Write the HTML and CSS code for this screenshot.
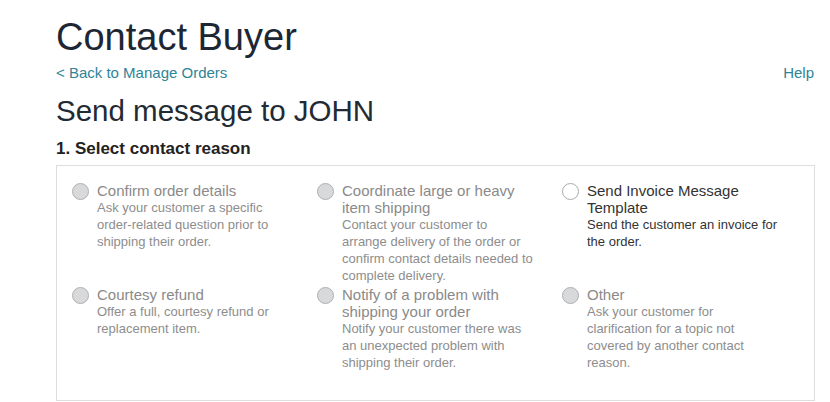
FILE: index.html
```html
<!DOCTYPE html>
<html lang="en">
<head>
<meta charset="utf-8">
<title>Contact Buyer</title>
<link rel="stylesheet" href="styles.css">
</head>
<body>
<div class="page">
  <h1 class="title">Contact Buyer</h1>
  <div class="navrow">
    <a class="link" href="#">&lt; Back to Manage Orders</a>
    <a class="link" href="#">Help</a>
  </div>
  <h2 class="subtitle">Send message to JOHN</h2>
  <h3 class="step">1. Select contact reason</h3>
  <div class="box">
    <label class="opt disabled">
      <input type="radio" name="reason" disabled>
      <span class="txt">
        <span class="lbl">Confirm order details</span>
        <span class="desc">Ask your customer a specific order-related question prior to shipping their order.</span>
      </span>
    </label>
    <label class="opt disabled">
      <input type="radio" name="reason" disabled>
      <span class="txt">
        <span class="lbl">Coordinate large or heavy item shipping</span>
        <span class="desc">Contact your customer to arrange delivery of the order or confirm contact details needed to complete delivery.</span>
      </span>
    </label>
    <label class="opt">
      <input type="radio" name="reason">
      <span class="txt">
        <span class="lbl">Send Invoice Message Template</span>
        <span class="desc">Send the customer an invoice for the order.</span>
      </span>
    </label>
    <label class="opt disabled">
      <input type="radio" name="reason" disabled>
      <span class="txt">
        <span class="lbl">Courtesy refund</span>
        <span class="desc">Offer a full, courtesy refund or replacement item.</span>
      </span>
    </label>
    <label class="opt disabled">
      <input type="radio" name="reason" disabled>
      <span class="txt">
        <span class="lbl">Notify of a problem with shipping your order</span>
        <span class="desc">Notify your customer there was an unexpected problem with shipping their order.</span>
      </span>
    </label>
    <label class="opt disabled">
      <input type="radio" name="reason" disabled>
      <span class="txt">
        <span class="lbl">Other</span>
        <span class="desc">Ask your customer for clarification for a topic not covered by another contact reason.</span>
      </span>
    </label>
  </div>
</div>
</body>
</html>
```
FILE: styles.css
```css
html, body {
  margin: 0;
  padding: 0;
  background: #ffffff;
}
body {
  font-family: "Liberation Sans", Arial, sans-serif;
  color: #333333;
}
.page {
  width: 759px;
  margin-left: 56px;
  padding-top: 15px;
}
.title {
  margin: 0;
  font-size: 38px;
  line-height: 44px;
  font-weight: normal;
  color: #1d2734;
}
.navrow {
  display: flex;
  justify-content: space-between;
  margin-top: 5px;
  padding-right: 1px;
}
.link {
  font-size: 15px;
  line-height: 17px;
  color: #2f8497;
  text-decoration: none;
}
.subtitle {
  margin: 13px 0 0;
  font-size: 29.5px;
  line-height: 34px;
  font-weight: normal;
  color: #222a33;
}
.step {
  margin: 11px 0 0;
  font-size: 17px;
  line-height: 20px;
  font-weight: bold;
  color: #222222;
}
.box {
  margin-top: 6px;
  border: 1px solid #dddddd;
  padding: 16px 0 29px 15px;
  display: grid;
  grid-template-columns: 245px 245px 245px;
  row-gap: 2px;
}
.opt {
  display: flex;
  gap: 8px;
  align-items: flex-start;
}
.opt input {
  appearance: none;
  -webkit-appearance: none;
  margin: 1px 0 0;
  width: 17px;
  height: 17px;
  border-radius: 50%;
  border: 1px solid #a9a9a9;
  background: #ffffff;
  flex: none;
  box-sizing: border-box;
}
.opt.disabled input {
  background: #d8d9db;
  border-color: #b0b0b0;
}
.txt {
  display: flex;
  flex-direction: column;
  width: 196px;
}
.lbl {
  font-size: 15px;
  line-height: 17px;
  color: #333333;
}
.desc {
  width: 192px;
  font-size: 13px;
  line-height: 17px;
  color: #333333;
}
.opt.disabled .lbl {
  color: #8a8a8a;
}
.opt.disabled .desc {
  color: #8d8d8d;
}
```
